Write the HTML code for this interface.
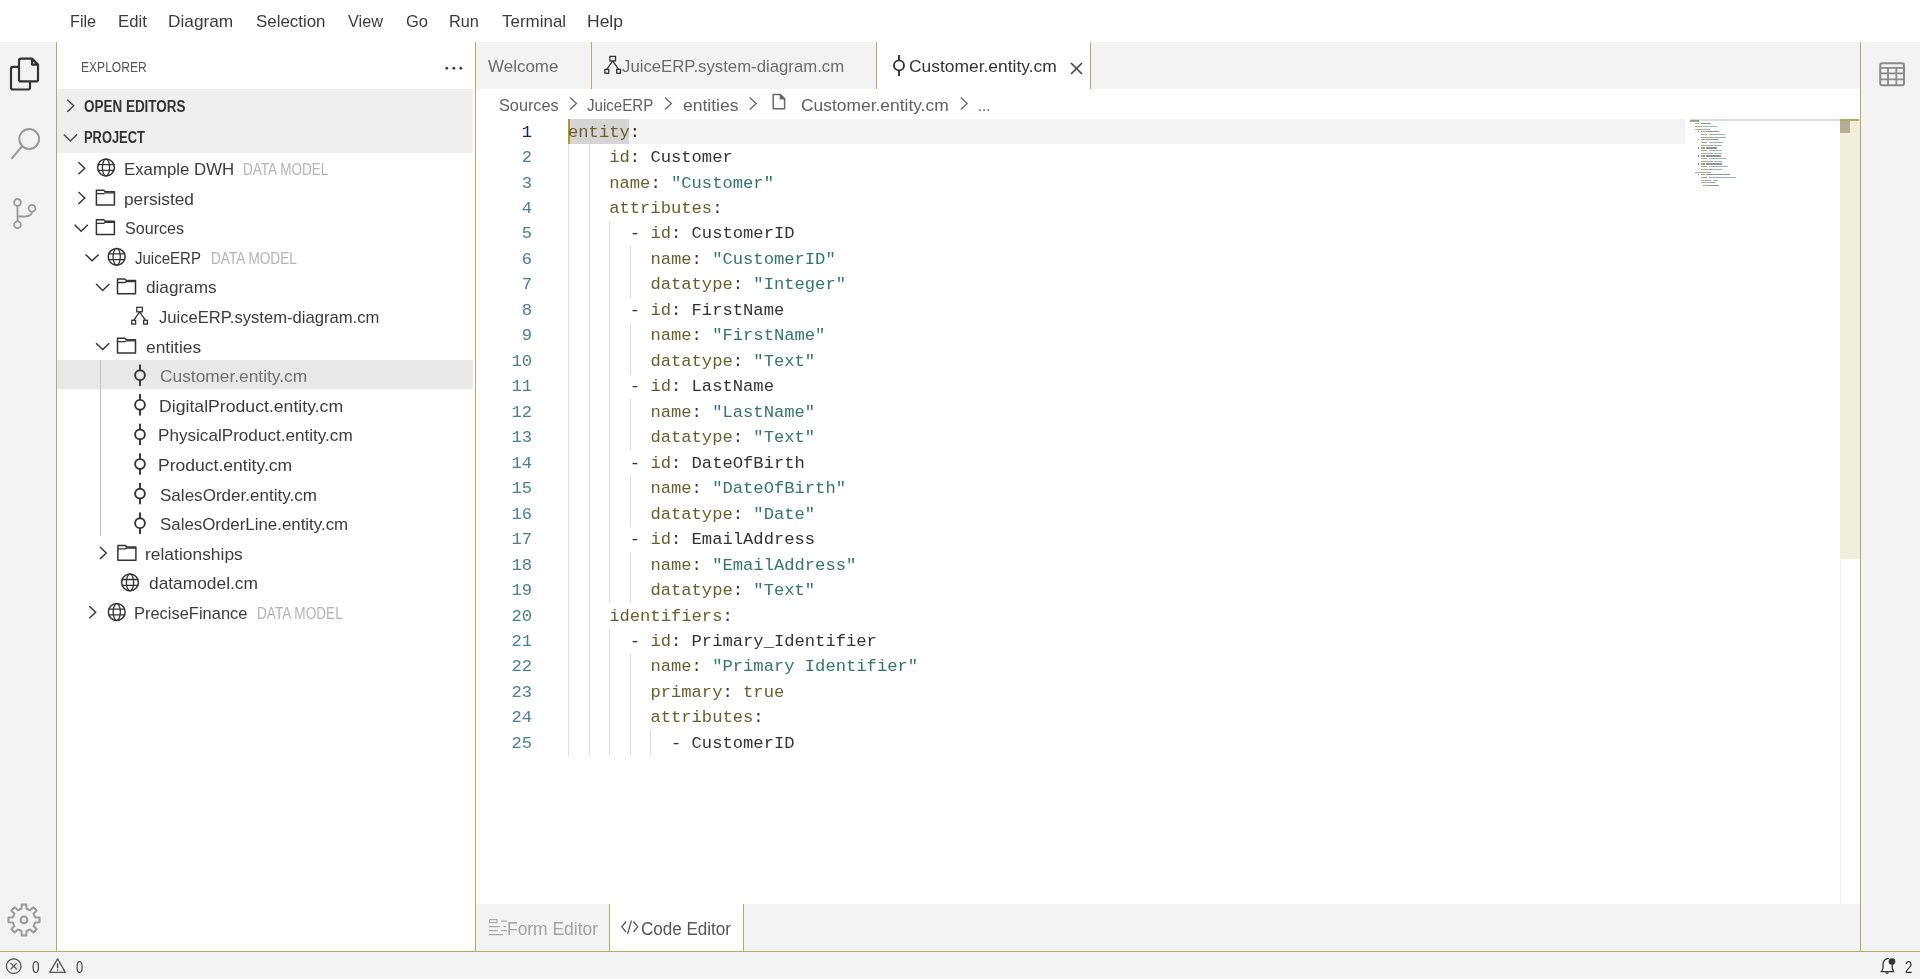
<!DOCTYPE html>
<html><head><meta charset="utf-8"><style>
html,body{margin:0;padding:0;width:1920px;height:979px;overflow:hidden;background:#fff;position:relative}
.r{position:absolute}
.t{position:absolute;white-space:pre;font-family:"Liberation Sans",sans-serif;transform-origin:0 0}
.cl{position:absolute;white-space:pre;font-family:"Liberation Mono",monospace;font-size:17.17px;line-height:25.47px;height:25.47px;color:#333}
.ln{position:absolute;left:480px;width:52px;text-align:right;white-space:pre;font-family:"Liberation Mono",monospace;font-size:17.17px;line-height:25.47px}
svg{position:absolute;left:0;top:0}
</style></head><body><div id="root" style="position:absolute;left:0;top:0;width:1920px;height:979px;overflow:hidden;will-change:transform">
<div class="r" style="left:0px;top:0px;width:1920px;height:42px;background:#ffffff"></div><div class="r" style="left:0px;top:42px;width:56px;height:909px;background:#f3f3f3"></div><div class="r" style="left:56px;top:42px;width:1px;height:909px;background:#b3aa66"></div><div class="r" style="left:57px;top:89px;width:416px;height:64px;background:#efefef"></div><div class="r" style="left:57px;top:360.2px;width:416px;height:28.8px;background:#e8e8e8"></div><div class="r" style="left:100px;top:360px;width:1px;height:176px;background:#c4c4c4"></div><div class="r" style="left:475px;top:42px;width:1px;height:909px;background:#b3aa66"></div><div class="r" style="left:476px;top:42px;width:1384px;height:47px;background:#f3f3f3"></div><div class="r" style="left:877px;top:42px;width:213px;height:47px;background:#ffffff"></div><div class="r" style="left:591px;top:42px;width:1px;height:47px;background:#b3aa66"></div><div class="r" style="left:876px;top:42px;width:1px;height:47px;background:#b3aa66"></div><div class="r" style="left:1090px;top:42px;width:1px;height:47px;background:#b3aa66"></div><div class="r" style="left:568px;top:118.8px;width:1117px;height:25px;background:#f3f3f3"></div><div class="r" style="left:568px;top:118.8px;width:61px;height:25px;background:#d5d5d5"></div><div class="r" style="left:1690px;top:119px;width:150px;height:2px;background:#dcdcdc"></div><div class="r" style="left:1840px;top:118.8px;width:20px;height:440px;background:#f3eddb"></div><div class="r" style="left:1840px;top:118.8px;width:19px;height:2px;background:#b3aa66"></div><div class="r" style="left:1840px;top:121.4px;width:9.6px;height:11.3px;background:#b6ae92"></div><div class="r" style="left:1840px;top:558.8px;width:1px;height:345px;background:#f0f0f0"></div><div class="r" style="left:1860px;top:42px;width:1px;height:909px;background:#b3aa66"></div><div class="r" style="left:1861px;top:42px;width:59px;height:909px;background:#f3f3f3"></div><div class="r" style="left:476px;top:903.75px;width:1384px;height:47.25px;background:#f3f3f3"></div><div class="r" style="left:609px;top:903.75px;width:133.5px;height:47.25px;background:#ffffff"></div><div class="r" style="left:608.5px;top:903.75px;width:1px;height:47.25px;background:#b3aa66"></div><div class="r" style="left:742.5px;top:903.75px;width:1px;height:47.25px;background:#b3aa66"></div><div class="r" style="left:0px;top:951px;width:1920px;height:1px;background:#b3aa66"></div><div class="r" style="left:0px;top:952px;width:1920px;height:27px;background:#f3f3f3"></div><div class="r" style="left:1690.0px;top:120.4px;width:8.04px;height:1.3px;background:#6a5f2c88"></div><div class="r" style="left:1698.04px;top:120.4px;width:1.34px;height:1.3px;background:#33333388"></div><div class="r" style="left:568.0px;top:144.26999999999998px;width:1px;height:25.97px;background:#dcdcdc"></div><div class="r" style="left:588.6px;top:144.26999999999998px;width:1px;height:25.97px;background:#dcdcdc"></div><div class="r" style="left:1695.36px;top:123.1px;width:2.68px;height:1.3px;background:#6a5f2c88"></div><div class="r" style="left:1698.04px;top:123.1px;width:1.34px;height:1.3px;background:#33333388"></div><div class="r" style="left:1700.72px;top:123.1px;width:10.72px;height:1.3px;background:#33333388"></div><div class="r" style="left:568.0px;top:169.74px;width:1px;height:25.97px;background:#dcdcdc"></div><div class="r" style="left:588.6px;top:169.74px;width:1px;height:25.97px;background:#dcdcdc"></div><div class="r" style="left:1695.36px;top:125.8px;width:5.36px;height:1.3px;background:#6a5f2c88"></div><div class="r" style="left:1700.72px;top:125.8px;width:1.34px;height:1.3px;background:#33333388"></div><div class="r" style="left:1703.4px;top:125.8px;width:13.4px;height:1.3px;background:#33756f88"></div><div class="r" style="left:568.0px;top:195.20999999999998px;width:1px;height:25.97px;background:#dcdcdc"></div><div class="r" style="left:588.6px;top:195.20999999999998px;width:1px;height:25.97px;background:#dcdcdc"></div><div class="r" style="left:1695.36px;top:128.5px;width:13.4px;height:1.3px;background:#6a5f2c88"></div><div class="r" style="left:1708.76px;top:128.5px;width:1.34px;height:1.3px;background:#33333388"></div><div class="r" style="left:568.0px;top:220.68px;width:1px;height:25.97px;background:#dcdcdc"></div><div class="r" style="left:588.6px;top:220.68px;width:1px;height:25.97px;background:#dcdcdc"></div><div class="r" style="left:609.2px;top:220.68px;width:1px;height:25.97px;background:#dcdcdc"></div><div class="r" style="left:1698.04px;top:131.1px;width:1.34px;height:1.3px;background:#33333388"></div><div class="r" style="left:1700.72px;top:131.1px;width:2.68px;height:1.3px;background:#6a5f2c88"></div><div class="r" style="left:1703.4px;top:131.1px;width:1.34px;height:1.3px;background:#33333388"></div><div class="r" style="left:1706.08px;top:131.1px;width:13.4px;height:1.3px;background:#33333388"></div><div class="r" style="left:568.0px;top:246.14999999999998px;width:1px;height:25.97px;background:#dcdcdc"></div><div class="r" style="left:588.6px;top:246.14999999999998px;width:1px;height:25.97px;background:#dcdcdc"></div><div class="r" style="left:609.2px;top:246.14999999999998px;width:1px;height:25.97px;background:#dcdcdc"></div><div class="r" style="left:629.8px;top:246.14999999999998px;width:1px;height:25.97px;background:#dcdcdc"></div><div class="r" style="left:1700.72px;top:133.8px;width:5.36px;height:1.3px;background:#6a5f2c88"></div><div class="r" style="left:1706.08px;top:133.8px;width:1.34px;height:1.3px;background:#33333388"></div><div class="r" style="left:1708.76px;top:133.8px;width:16.08px;height:1.3px;background:#33756f88"></div><div class="r" style="left:568.0px;top:271.62px;width:1px;height:25.97px;background:#dcdcdc"></div><div class="r" style="left:588.6px;top:271.62px;width:1px;height:25.97px;background:#dcdcdc"></div><div class="r" style="left:609.2px;top:271.62px;width:1px;height:25.97px;background:#dcdcdc"></div><div class="r" style="left:629.8px;top:271.62px;width:1px;height:25.97px;background:#dcdcdc"></div><div class="r" style="left:1700.72px;top:136.5px;width:10.72px;height:1.3px;background:#6a5f2c88"></div><div class="r" style="left:1711.44px;top:136.5px;width:1.34px;height:1.3px;background:#33333388"></div><div class="r" style="left:1714.12px;top:136.5px;width:12.06px;height:1.3px;background:#33756f88"></div><div class="r" style="left:568.0px;top:297.09px;width:1px;height:25.97px;background:#dcdcdc"></div><div class="r" style="left:588.6px;top:297.09px;width:1px;height:25.97px;background:#dcdcdc"></div><div class="r" style="left:609.2px;top:297.09px;width:1px;height:25.97px;background:#dcdcdc"></div><div class="r" style="left:1698.04px;top:139.2px;width:1.34px;height:1.3px;background:#33333388"></div><div class="r" style="left:1700.72px;top:139.2px;width:2.68px;height:1.3px;background:#6a5f2c88"></div><div class="r" style="left:1703.4px;top:139.2px;width:1.34px;height:1.3px;background:#33333388"></div><div class="r" style="left:1706.08px;top:139.2px;width:12.06px;height:1.3px;background:#33333388"></div><div class="r" style="left:568.0px;top:322.56px;width:1px;height:25.97px;background:#dcdcdc"></div><div class="r" style="left:588.6px;top:322.56px;width:1px;height:25.97px;background:#dcdcdc"></div><div class="r" style="left:609.2px;top:322.56px;width:1px;height:25.97px;background:#dcdcdc"></div><div class="r" style="left:629.8px;top:322.56px;width:1px;height:25.97px;background:#dcdcdc"></div><div class="r" style="left:1700.72px;top:141.9px;width:5.36px;height:1.3px;background:#6a5f2c88"></div><div class="r" style="left:1706.08px;top:141.9px;width:1.34px;height:1.3px;background:#33333388"></div><div class="r" style="left:1708.76px;top:141.9px;width:14.74px;height:1.3px;background:#33756f88"></div><div class="r" style="left:568.0px;top:348.03px;width:1px;height:25.97px;background:#dcdcdc"></div><div class="r" style="left:588.6px;top:348.03px;width:1px;height:25.97px;background:#dcdcdc"></div><div class="r" style="left:609.2px;top:348.03px;width:1px;height:25.97px;background:#dcdcdc"></div><div class="r" style="left:629.8px;top:348.03px;width:1px;height:25.97px;background:#dcdcdc"></div><div class="r" style="left:1700.72px;top:144.6px;width:10.72px;height:1.3px;background:#6a5f2c88"></div><div class="r" style="left:1711.44px;top:144.6px;width:1.34px;height:1.3px;background:#33333388"></div><div class="r" style="left:1714.12px;top:144.6px;width:8.04px;height:1.3px;background:#33756f88"></div><div class="r" style="left:568.0px;top:373.5px;width:1px;height:25.97px;background:#dcdcdc"></div><div class="r" style="left:588.6px;top:373.5px;width:1px;height:25.97px;background:#dcdcdc"></div><div class="r" style="left:609.2px;top:373.5px;width:1px;height:25.97px;background:#dcdcdc"></div><div class="r" style="left:1698.04px;top:147.3px;width:1.34px;height:1.3px;background:#33333388"></div><div class="r" style="left:1700.72px;top:147.3px;width:2.68px;height:1.3px;background:#6a5f2c88"></div><div class="r" style="left:1703.4px;top:147.3px;width:1.34px;height:1.3px;background:#33333388"></div><div class="r" style="left:1706.08px;top:147.3px;width:10.72px;height:1.3px;background:#33333388"></div><div class="r" style="left:568.0px;top:398.96999999999997px;width:1px;height:25.97px;background:#dcdcdc"></div><div class="r" style="left:588.6px;top:398.96999999999997px;width:1px;height:25.97px;background:#dcdcdc"></div><div class="r" style="left:609.2px;top:398.96999999999997px;width:1px;height:25.97px;background:#dcdcdc"></div><div class="r" style="left:629.8px;top:398.96999999999997px;width:1px;height:25.97px;background:#dcdcdc"></div><div class="r" style="left:1700.72px;top:150.0px;width:5.36px;height:1.3px;background:#6a5f2c88"></div><div class="r" style="left:1706.08px;top:150.0px;width:1.34px;height:1.3px;background:#33333388"></div><div class="r" style="left:1708.76px;top:150.0px;width:13.4px;height:1.3px;background:#33756f88"></div><div class="r" style="left:568.0px;top:424.44px;width:1px;height:25.97px;background:#dcdcdc"></div><div class="r" style="left:588.6px;top:424.44px;width:1px;height:25.97px;background:#dcdcdc"></div><div class="r" style="left:609.2px;top:424.44px;width:1px;height:25.97px;background:#dcdcdc"></div><div class="r" style="left:629.8px;top:424.44px;width:1px;height:25.97px;background:#dcdcdc"></div><div class="r" style="left:1700.72px;top:152.6px;width:10.72px;height:1.3px;background:#6a5f2c88"></div><div class="r" style="left:1711.44px;top:152.6px;width:1.34px;height:1.3px;background:#33333388"></div><div class="r" style="left:1714.12px;top:152.6px;width:8.04px;height:1.3px;background:#33756f88"></div><div class="r" style="left:568.0px;top:449.91px;width:1px;height:25.97px;background:#dcdcdc"></div><div class="r" style="left:588.6px;top:449.91px;width:1px;height:25.97px;background:#dcdcdc"></div><div class="r" style="left:609.2px;top:449.91px;width:1px;height:25.97px;background:#dcdcdc"></div><div class="r" style="left:1698.04px;top:155.3px;width:1.34px;height:1.3px;background:#33333388"></div><div class="r" style="left:1700.72px;top:155.3px;width:2.68px;height:1.3px;background:#6a5f2c88"></div><div class="r" style="left:1703.4px;top:155.3px;width:1.34px;height:1.3px;background:#33333388"></div><div class="r" style="left:1706.08px;top:155.3px;width:14.74px;height:1.3px;background:#33333388"></div><div class="r" style="left:568.0px;top:475.38px;width:1px;height:25.97px;background:#dcdcdc"></div><div class="r" style="left:588.6px;top:475.38px;width:1px;height:25.97px;background:#dcdcdc"></div><div class="r" style="left:609.2px;top:475.38px;width:1px;height:25.97px;background:#dcdcdc"></div><div class="r" style="left:629.8px;top:475.38px;width:1px;height:25.97px;background:#dcdcdc"></div><div class="r" style="left:1700.72px;top:158.0px;width:5.36px;height:1.3px;background:#6a5f2c88"></div><div class="r" style="left:1706.08px;top:158.0px;width:1.34px;height:1.3px;background:#33333388"></div><div class="r" style="left:1708.76px;top:158.0px;width:17.42px;height:1.3px;background:#33756f88"></div><div class="r" style="left:568.0px;top:500.84999999999997px;width:1px;height:25.97px;background:#dcdcdc"></div><div class="r" style="left:588.6px;top:500.84999999999997px;width:1px;height:25.97px;background:#dcdcdc"></div><div class="r" style="left:609.2px;top:500.84999999999997px;width:1px;height:25.97px;background:#dcdcdc"></div><div class="r" style="left:629.8px;top:500.84999999999997px;width:1px;height:25.97px;background:#dcdcdc"></div><div class="r" style="left:1700.72px;top:160.7px;width:10.72px;height:1.3px;background:#6a5f2c88"></div><div class="r" style="left:1711.44px;top:160.7px;width:1.34px;height:1.3px;background:#33333388"></div><div class="r" style="left:1714.12px;top:160.7px;width:8.04px;height:1.3px;background:#33756f88"></div><div class="r" style="left:568.0px;top:526.3199999999999px;width:1px;height:25.97px;background:#dcdcdc"></div><div class="r" style="left:588.6px;top:526.3199999999999px;width:1px;height:25.97px;background:#dcdcdc"></div><div class="r" style="left:609.2px;top:526.3199999999999px;width:1px;height:25.97px;background:#dcdcdc"></div><div class="r" style="left:1698.04px;top:163.4px;width:1.34px;height:1.3px;background:#33333388"></div><div class="r" style="left:1700.72px;top:163.4px;width:2.68px;height:1.3px;background:#6a5f2c88"></div><div class="r" style="left:1703.4px;top:163.4px;width:1.34px;height:1.3px;background:#33333388"></div><div class="r" style="left:1706.08px;top:163.4px;width:16.08px;height:1.3px;background:#33333388"></div><div class="r" style="left:568.0px;top:551.79px;width:1px;height:25.97px;background:#dcdcdc"></div><div class="r" style="left:588.6px;top:551.79px;width:1px;height:25.97px;background:#dcdcdc"></div><div class="r" style="left:609.2px;top:551.79px;width:1px;height:25.97px;background:#dcdcdc"></div><div class="r" style="left:629.8px;top:551.79px;width:1px;height:25.97px;background:#dcdcdc"></div><div class="r" style="left:1700.72px;top:166.1px;width:5.36px;height:1.3px;background:#6a5f2c88"></div><div class="r" style="left:1706.08px;top:166.1px;width:1.34px;height:1.3px;background:#33333388"></div><div class="r" style="left:1708.76px;top:166.1px;width:18.76px;height:1.3px;background:#33756f88"></div><div class="r" style="left:568.0px;top:577.26px;width:1px;height:25.97px;background:#dcdcdc"></div><div class="r" style="left:588.6px;top:577.26px;width:1px;height:25.97px;background:#dcdcdc"></div><div class="r" style="left:609.2px;top:577.26px;width:1px;height:25.97px;background:#dcdcdc"></div><div class="r" style="left:629.8px;top:577.26px;width:1px;height:25.97px;background:#dcdcdc"></div><div class="r" style="left:1700.72px;top:168.8px;width:10.72px;height:1.3px;background:#6a5f2c88"></div><div class="r" style="left:1711.44px;top:168.8px;width:1.34px;height:1.3px;background:#33333388"></div><div class="r" style="left:1714.12px;top:168.8px;width:8.04px;height:1.3px;background:#33756f88"></div><div class="r" style="left:568.0px;top:602.7299999999999px;width:1px;height:25.97px;background:#dcdcdc"></div><div class="r" style="left:588.6px;top:602.7299999999999px;width:1px;height:25.97px;background:#dcdcdc"></div><div class="r" style="left:1695.36px;top:171.5px;width:14.74px;height:1.3px;background:#6a5f2c88"></div><div class="r" style="left:1710.1px;top:171.5px;width:1.34px;height:1.3px;background:#33333388"></div><div class="r" style="left:568.0px;top:628.1999999999999px;width:1px;height:25.97px;background:#dcdcdc"></div><div class="r" style="left:588.6px;top:628.1999999999999px;width:1px;height:25.97px;background:#dcdcdc"></div><div class="r" style="left:609.2px;top:628.1999999999999px;width:1px;height:25.97px;background:#dcdcdc"></div><div class="r" style="left:1698.04px;top:174.1px;width:1.34px;height:1.3px;background:#33333388"></div><div class="r" style="left:1700.72px;top:174.1px;width:2.68px;height:1.3px;background:#6a5f2c88"></div><div class="r" style="left:1703.4px;top:174.1px;width:1.34px;height:1.3px;background:#33333388"></div><div class="r" style="left:1706.08px;top:174.1px;width:24.12px;height:1.3px;background:#33333388"></div><div class="r" style="left:568.0px;top:653.67px;width:1px;height:25.97px;background:#dcdcdc"></div><div class="r" style="left:588.6px;top:653.67px;width:1px;height:25.97px;background:#dcdcdc"></div><div class="r" style="left:609.2px;top:653.67px;width:1px;height:25.97px;background:#dcdcdc"></div><div class="r" style="left:629.8px;top:653.67px;width:1px;height:25.97px;background:#dcdcdc"></div><div class="r" style="left:1700.72px;top:176.8px;width:5.36px;height:1.3px;background:#6a5f2c88"></div><div class="r" style="left:1706.08px;top:176.8px;width:1.34px;height:1.3px;background:#33333388"></div><div class="r" style="left:1708.76px;top:176.8px;width:26.8px;height:1.3px;background:#33756f88"></div><div class="r" style="left:568.0px;top:679.1399999999999px;width:1px;height:25.97px;background:#dcdcdc"></div><div class="r" style="left:588.6px;top:679.1399999999999px;width:1px;height:25.97px;background:#dcdcdc"></div><div class="r" style="left:609.2px;top:679.1399999999999px;width:1px;height:25.97px;background:#dcdcdc"></div><div class="r" style="left:629.8px;top:679.1399999999999px;width:1px;height:25.97px;background:#dcdcdc"></div><div class="r" style="left:1700.72px;top:179.5px;width:9.38px;height:1.3px;background:#6a5f2c88"></div><div class="r" style="left:1710.1px;top:179.5px;width:1.34px;height:1.3px;background:#33333388"></div><div class="r" style="left:1712.78px;top:179.5px;width:5.36px;height:1.3px;background:#6a5f2c88"></div><div class="r" style="left:568.0px;top:704.6099999999999px;width:1px;height:25.97px;background:#dcdcdc"></div><div class="r" style="left:588.6px;top:704.6099999999999px;width:1px;height:25.97px;background:#dcdcdc"></div><div class="r" style="left:609.2px;top:704.6099999999999px;width:1px;height:25.97px;background:#dcdcdc"></div><div class="r" style="left:629.8px;top:704.6099999999999px;width:1px;height:25.97px;background:#dcdcdc"></div><div class="r" style="left:1700.72px;top:182.2px;width:13.4px;height:1.3px;background:#6a5f2c88"></div><div class="r" style="left:1714.12px;top:182.2px;width:1.34px;height:1.3px;background:#33333388"></div><div class="r" style="left:568.0px;top:730.0799999999999px;width:1px;height:25.97px;background:#dcdcdc"></div><div class="r" style="left:588.6px;top:730.0799999999999px;width:1px;height:25.97px;background:#dcdcdc"></div><div class="r" style="left:609.2px;top:730.0799999999999px;width:1px;height:25.97px;background:#dcdcdc"></div><div class="r" style="left:629.8px;top:730.0799999999999px;width:1px;height:25.97px;background:#dcdcdc"></div><div class="r" style="left:650.4px;top:730.0799999999999px;width:1px;height:25.97px;background:#dcdcdc"></div><div class="r" style="left:1703.4px;top:184.9px;width:1.34px;height:1.3px;background:#33333388"></div><div class="r" style="left:1706.08px;top:184.9px;width:13.4px;height:1.3px;background:#33333388"></div><div class="r" style="left:568px;top:118.8px;width:2px;height:25px;background:#b5952f"></div>
<div class="cl" style="top:119.60px;left:568px"><span style="color:#6a5f2c">entity</span><span style="color:#333333">:</span></div><div class="ln" style="top:119.60px;color:#0b216f">1</div><div class="cl" style="top:145.07px;left:568px">    <span style="color:#6a5f2c">id</span><span style="color:#333333">: </span><span style="color:#333333">Customer</span></div><div class="ln" style="top:145.07px;color:#4a8093">2</div><div class="cl" style="top:170.54px;left:568px">    <span style="color:#6a5f2c">name</span><span style="color:#333333">: </span><span style="color:#33756f">"Customer"</span></div><div class="ln" style="top:170.54px;color:#4a8093">3</div><div class="cl" style="top:196.01px;left:568px">    <span style="color:#6a5f2c">attributes</span><span style="color:#333333">:</span></div><div class="ln" style="top:196.01px;color:#4a8093">4</div><div class="cl" style="top:221.48px;left:568px">      <span style="color:#333333">- </span><span style="color:#6a5f2c">id</span><span style="color:#333333">: </span><span style="color:#333333">CustomerID</span></div><div class="ln" style="top:221.48px;color:#4a8093">5</div><div class="cl" style="top:246.95px;left:568px">        <span style="color:#6a5f2c">name</span><span style="color:#333333">: </span><span style="color:#33756f">"CustomerID"</span></div><div class="ln" style="top:246.95px;color:#4a8093">6</div><div class="cl" style="top:272.42px;left:568px">        <span style="color:#6a5f2c">datatype</span><span style="color:#333333">: </span><span style="color:#33756f">"Integer"</span></div><div class="ln" style="top:272.42px;color:#4a8093">7</div><div class="cl" style="top:297.89px;left:568px">      <span style="color:#333333">- </span><span style="color:#6a5f2c">id</span><span style="color:#333333">: </span><span style="color:#333333">FirstName</span></div><div class="ln" style="top:297.89px;color:#4a8093">8</div><div class="cl" style="top:323.36px;left:568px">        <span style="color:#6a5f2c">name</span><span style="color:#333333">: </span><span style="color:#33756f">"FirstName"</span></div><div class="ln" style="top:323.36px;color:#4a8093">9</div><div class="cl" style="top:348.83px;left:568px">        <span style="color:#6a5f2c">datatype</span><span style="color:#333333">: </span><span style="color:#33756f">"Text"</span></div><div class="ln" style="top:348.83px;color:#4a8093">10</div><div class="cl" style="top:374.30px;left:568px">      <span style="color:#333333">- </span><span style="color:#6a5f2c">id</span><span style="color:#333333">: </span><span style="color:#333333">LastName</span></div><div class="ln" style="top:374.30px;color:#4a8093">11</div><div class="cl" style="top:399.77px;left:568px">        <span style="color:#6a5f2c">name</span><span style="color:#333333">: </span><span style="color:#33756f">"LastName"</span></div><div class="ln" style="top:399.77px;color:#4a8093">12</div><div class="cl" style="top:425.24px;left:568px">        <span style="color:#6a5f2c">datatype</span><span style="color:#333333">: </span><span style="color:#33756f">"Text"</span></div><div class="ln" style="top:425.24px;color:#4a8093">13</div><div class="cl" style="top:450.71px;left:568px">      <span style="color:#333333">- </span><span style="color:#6a5f2c">id</span><span style="color:#333333">: </span><span style="color:#333333">DateOfBirth</span></div><div class="ln" style="top:450.71px;color:#4a8093">14</div><div class="cl" style="top:476.18px;left:568px">        <span style="color:#6a5f2c">name</span><span style="color:#333333">: </span><span style="color:#33756f">"DateOfBirth"</span></div><div class="ln" style="top:476.18px;color:#4a8093">15</div><div class="cl" style="top:501.65px;left:568px">        <span style="color:#6a5f2c">datatype</span><span style="color:#333333">: </span><span style="color:#33756f">"Date"</span></div><div class="ln" style="top:501.65px;color:#4a8093">16</div><div class="cl" style="top:527.12px;left:568px">      <span style="color:#333333">- </span><span style="color:#6a5f2c">id</span><span style="color:#333333">: </span><span style="color:#333333">EmailAddress</span></div><div class="ln" style="top:527.12px;color:#4a8093">17</div><div class="cl" style="top:552.59px;left:568px">        <span style="color:#6a5f2c">name</span><span style="color:#333333">: </span><span style="color:#33756f">"EmailAddress"</span></div><div class="ln" style="top:552.59px;color:#4a8093">18</div><div class="cl" style="top:578.06px;left:568px">        <span style="color:#6a5f2c">datatype</span><span style="color:#333333">: </span><span style="color:#33756f">"Text"</span></div><div class="ln" style="top:578.06px;color:#4a8093">19</div><div class="cl" style="top:603.53px;left:568px">    <span style="color:#6a5f2c">identifiers</span><span style="color:#333333">:</span></div><div class="ln" style="top:603.53px;color:#4a8093">20</div><div class="cl" style="top:629.00px;left:568px">      <span style="color:#333333">- </span><span style="color:#6a5f2c">id</span><span style="color:#333333">: </span><span style="color:#333333">Primary_Identifier</span></div><div class="ln" style="top:629.00px;color:#4a8093">21</div><div class="cl" style="top:654.47px;left:568px">        <span style="color:#6a5f2c">name</span><span style="color:#333333">: </span><span style="color:#33756f">"Primary Identifier"</span></div><div class="ln" style="top:654.47px;color:#4a8093">22</div><div class="cl" style="top:679.94px;left:568px">        <span style="color:#6a5f2c">primary</span><span style="color:#333333">: </span><span style="color:#6a5f2c">true</span></div><div class="ln" style="top:679.94px;color:#4a8093">23</div><div class="cl" style="top:705.41px;left:568px">        <span style="color:#6a5f2c">attributes</span><span style="color:#333333">:</span></div><div class="ln" style="top:705.41px;color:#4a8093">24</div><div class="cl" style="top:730.88px;left:568px">          <span style="color:#333333">- </span><span style="color:#333333">CustomerID</span></div><div class="ln" style="top:730.88px;color:#4a8093">25</div>
<div class="t" style="left:70.30px;top:9px;font-size:17px;line-height:26px;font-weight:400;color:#3b3b3b;transform:scaleX(0.9542)">File</div><div class="t" style="left:117.62px;top:9px;font-size:17px;line-height:26px;font-weight:400;color:#3b3b3b;transform:scaleX(0.9835)">Edit</div><div class="t" style="left:168.39px;top:9px;font-size:17px;line-height:26px;font-weight:400;color:#3b3b3b;transform:scaleX(1.0146)">Diagram</div><div class="t" style="left:256.00px;top:9px;font-size:17px;line-height:26px;font-weight:400;color:#3b3b3b;transform:scaleX(0.9931)">Selection</div><div class="t" style="left:347.80px;top:9px;font-size:17px;line-height:26px;font-weight:400;color:#3b3b3b;transform:scaleX(0.9554)">View</div><div class="t" style="left:405.60px;top:9px;font-size:17px;line-height:26px;font-weight:400;color:#3b3b3b;transform:scaleX(0.9720)">Go</div><div class="t" style="left:449.24px;top:9px;font-size:17px;line-height:26px;font-weight:400;color:#3b3b3b;transform:scaleX(0.9603)">Run</div><div class="t" style="left:501.70px;top:9px;font-size:17px;line-height:26px;font-weight:400;color:#3b3b3b;transform:scaleX(0.9974)">Terminal</div><div class="t" style="left:586.97px;top:9px;font-size:17px;line-height:26px;font-weight:400;color:#3b3b3b;transform:scaleX(1.0296)">Help</div><div class="t" style="left:81.00px;top:56px;font-size:15px;line-height:22px;font-weight:400;color:#555555;transform:scaleX(0.8038)">EXPLORER</div><div class="t" style="left:84.40px;top:95px;font-size:16px;line-height:24px;font-weight:700;color:#333333;transform:scaleX(0.8417)">OPEN EDITORS</div><div class="t" style="left:83.60px;top:126px;font-size:16px;line-height:24px;font-weight:700;color:#333333;transform:scaleX(0.8048)">PROJECT</div><div class="t" style="left:123.76px;top:157px;font-size:17px;line-height:26px;font-weight:400;color:#3b3b3b;transform:scaleX(0.9878)">Example DWH</div><div class="t" style="left:243.48px;top:157px;font-size:16.5px;line-height:25px;font-weight:400;color:#b4b4b4;transform:scaleX(0.8211)">DATA MODEL</div><div class="t" style="left:123.74px;top:187px;font-size:17px;line-height:26px;font-weight:400;color:#3b3b3b;transform:scaleX(1.0137)">persisted</div><div class="t" style="left:124.75px;top:216px;font-size:17px;line-height:26px;font-weight:400;color:#3b3b3b;transform:scaleX(0.9464)">Sources</div><div class="t" style="left:134.90px;top:246px;font-size:17px;line-height:26px;font-weight:400;color:#3b3b3b;transform:scaleX(0.8829)">JuiceERP</div><div class="t" style="left:211.42px;top:246px;font-size:16.5px;line-height:25px;font-weight:400;color:#b4b4b4;transform:scaleX(0.8264)">DATA MODEL</div><div class="t" style="left:146.30px;top:275px;font-size:17px;line-height:26px;font-weight:400;color:#3b3b3b;transform:scaleX(1.0084)">diagrams</div><div class="t" style="left:159.00px;top:305px;font-size:17px;line-height:26px;font-weight:400;color:#3b3b3b;transform:scaleX(0.9773)">JuiceERP.system-diagram.cm</div><div class="t" style="left:146.30px;top:335px;font-size:17px;line-height:26px;font-weight:400;color:#3b3b3b;transform:scaleX(1.0232)">entities</div><div class="t" style="left:159.60px;top:364px;font-size:17px;line-height:26px;font-weight:400;color:#707070;transform:scaleX(1.0204)">Customer.entity.cm</div><div class="t" style="left:158.56px;top:394px;font-size:17px;line-height:26px;font-weight:400;color:#3b3b3b;transform:scaleX(1.0384)">DigitalProduct.entity.cm</div><div class="t" style="left:158.49px;top:423px;font-size:17px;line-height:26px;font-weight:400;color:#3b3b3b;transform:scaleX(1.0067)">PhysicalProduct.entity.cm</div><div class="t" style="left:158.47px;top:453px;font-size:17px;line-height:26px;font-weight:400;color:#3b3b3b;transform:scaleX(1.0318)">Product.entity.cm</div><div class="t" style="left:159.50px;top:483px;font-size:17px;line-height:26px;font-weight:400;color:#3b3b3b;transform:scaleX(1.0025)">SalesOrder.entity.cm</div><div class="t" style="left:159.50px;top:512px;font-size:17px;line-height:26px;font-weight:400;color:#3b3b3b;transform:scaleX(0.9924)">SalesOrderLine.entity.cm</div><div class="t" style="left:145.23px;top:542px;font-size:17px;line-height:26px;font-weight:400;color:#3b3b3b;transform:scaleX(1.0246)">relationships</div><div class="t" style="left:148.75px;top:571px;font-size:17px;line-height:26px;font-weight:400;color:#3b3b3b;transform:scaleX(1.0201)">datamodel.cm</div><div class="t" style="left:134.03px;top:601px;font-size:17px;line-height:26px;font-weight:400;color:#3b3b3b;transform:scaleX(0.9679)">PreciseFinance</div><div class="t" style="left:256.68px;top:601px;font-size:16.5px;line-height:25px;font-weight:400;color:#b4b4b4;transform:scaleX(0.8250)">DATA MODEL</div><div class="t" style="left:488.00px;top:54px;font-size:17px;line-height:26px;font-weight:400;color:#6b6b6b;transform:scaleX(0.9988)">Welcome</div><div class="t" style="left:622.00px;top:54px;font-size:17px;line-height:26px;font-weight:400;color:#6b6b6b;transform:scaleX(0.9853)">JuiceERP.system-diagram.cm</div><div class="t" style="left:909.40px;top:54px;font-size:17px;line-height:26px;font-weight:400;color:#333333;transform:scaleX(1.0245)">Customer.entity.cm</div><div class="t" style="left:498.50px;top:93px;font-size:17px;line-height:26px;font-weight:400;color:#616161;transform:scaleX(0.9569)">Sources</div><div class="t" style="left:586.80px;top:93px;font-size:17px;line-height:26px;font-weight:400;color:#616161;transform:scaleX(0.8869)">JuiceERP</div><div class="t" style="left:682.70px;top:93px;font-size:17px;line-height:26px;font-weight:400;color:#616161;transform:scaleX(1.0307)">entities</div><div class="t" style="left:801.00px;top:93px;font-size:17px;line-height:26px;font-weight:400;color:#616161;transform:scaleX(1.0238)">Customer.entity.cm</div><div class="t" style="left:978.13px;top:93px;font-size:17px;line-height:26px;font-weight:400;color:#616161;transform:scaleX(0.8677)">...</div><div class="t" style="left:506.53px;top:916px;font-size:18px;line-height:27px;font-weight:400;color:#a3a3a3;transform:scaleX(0.9675)">Form Editor</div><div class="t" style="left:641.00px;top:916px;font-size:18px;line-height:27px;font-weight:400;color:#555555;transform:scaleX(0.9468)">Code Editor</div><div class="t" style="left:32.20px;top:956px;font-size:16px;line-height:24px;font-weight:400;color:#444444;transform:scaleX(0.8556)">0</div><div class="t" style="left:75.90px;top:956px;font-size:16px;line-height:24px;font-weight:400;color:#444444;transform:scaleX(0.8111)">0</div><div class="t" style="left:1905.20px;top:955px;font-size:17px;line-height:26px;font-weight:400;color:#333333;transform:scaleX(0.7778)">2</div>
<svg width="1920" height="979" viewBox="0 0 1920 979"><path d="M18.8 66.8 H13 Q11 66.8 11 68.8 V87.5 Q11 89.5 13 89.5 H28 Q30 89.5 30 87.5 V81.5" fill="none" stroke="#333333" stroke-width="2.2"/><path d="M21 58.6 H32 L38 64.6 V79.4 Q38 81.4 36 81.4 H21 Q19 81.4 19 79.4 V60.6 Q19 58.6 21 58.6 Z M32 58.6 V64.6 H38" fill="none" stroke="#333333" stroke-width="2.2" stroke-linejoin="round"/><circle cx="29.2" cy="139" r="9.9" fill="none" stroke="#9a9a9a" stroke-width="2"/><path d="M22.2 146 L11.5 158.8" stroke="#9a9a9a" stroke-width="2"/><circle cx="17.5" cy="202.4" r="3.4" fill="none" stroke="#9a9a9a" stroke-width="1.8"/><circle cx="32" cy="208.2" r="3.4" fill="none" stroke="#9a9a9a" stroke-width="1.8"/><circle cx="17.5" cy="224.8" r="3.4" fill="none" stroke="#9a9a9a" stroke-width="1.8"/><path d="M17.5 205.8 V221.4 M32 211.6 Q32 216.5 25 216.5 H17.5" fill="none" stroke="#9a9a9a" stroke-width="1.8"/><path d="M35.13 917.41 L39.52 917.55 L39.52 922.25 L35.13 922.39 L33.63 926.01 L36.64 929.22 L33.32 932.54 L30.11 929.53 L26.49 931.03 L26.35 935.42 L21.65 935.42 L21.51 931.03 L17.89 929.53 L14.68 932.54 L11.36 929.22 L14.37 926.01 L12.87 922.39 L8.48 922.25 L8.48 917.55 L12.87 917.41 L14.37 913.79 L11.36 910.58 L14.68 907.26 L17.89 910.27 L21.51 908.77 L21.65 904.38 L26.35 904.38 L26.49 908.77 L30.11 910.27 L33.32 907.26 L36.64 910.58 L33.63 913.79 Z" fill="none" stroke="#9a9a9a" stroke-width="2" stroke-linejoin="round"/><circle cx="24" cy="919.9" r="3.4" fill="none" stroke="#9a9a9a" stroke-width="2"/><circle cx="446.8" cy="68.3" r="1.45" fill="#444"/><circle cx="453.8" cy="68.3" r="1.45" fill="#444"/><circle cx="460.8" cy="68.3" r="1.45" fill="#444"/><path d="M67.3 99.8 L73.7 105.8 L67.3 111.8" fill="none" stroke="#444" stroke-width="1.4"/><path d="M63.800000000000004 134.60000000000002 L70.4 141.0 L77.0 134.60000000000002" fill="none" stroke="#444" stroke-width="1.4"/><path d="M78.45 162.3 L84.85000000000001 168.3 L78.45 174.3" fill="none" stroke="#333333" stroke-width="1.4"/><circle cx="106" cy="167.5" r="8.4" fill="none" stroke="#333333" stroke-width="1.5"/><ellipse cx="106" cy="167.5" rx="3.6" ry="8.4" fill="none" stroke="#333333" stroke-width="1.3"/><path d="M97.6 164.6 H114.4 M97.6 170.4 H114.4" stroke="#333333" stroke-width="1.3"/><path d="M78.45 191.9 L84.85000000000001 197.9 L78.45 203.9" fill="none" stroke="#333333" stroke-width="1.4"/><path d="M96.4 205.0 V190.2 H103.7 L105.2 191.7 H114.4 V205.0 Z" fill="none" stroke="#333333" stroke-width="1.5" stroke-linejoin="round"/><path d="M96.4 193.7 H103.7 L105.2 192.79999999999998 H114.4" fill="none" stroke="#333333" stroke-width="1.3"/><path d="M74.60000000000001 224.8 L81.2 231.2 L87.8 224.8" fill="none" stroke="#333333" stroke-width="1.4"/><path d="M96.4 234.6 V219.79999999999998 H103.7 L105.2 221.29999999999998 H114.4 V234.6 Z" fill="none" stroke="#333333" stroke-width="1.5" stroke-linejoin="round"/><path d="M96.4 223.29999999999998 H103.7 L105.2 222.39999999999998 H114.4" fill="none" stroke="#333333" stroke-width="1.3"/><path d="M85.5 254.40000000000003 L92.1 260.8 L98.69999999999999 254.40000000000003" fill="none" stroke="#333333" stroke-width="1.4"/><circle cx="116.7" cy="256.8" r="8.4" fill="none" stroke="#333333" stroke-width="1.5"/><ellipse cx="116.7" cy="256.8" rx="3.6" ry="8.4" fill="none" stroke="#333333" stroke-width="1.3"/><path d="M108.3 253.9 H125.10000000000001 M108.3 259.7 H125.10000000000001" stroke="#333333" stroke-width="1.3"/><path d="M96.10000000000001 284.00000000000006 L102.7 290.40000000000003 L109.3 284.00000000000006" fill="none" stroke="#333333" stroke-width="1.4"/><path d="M117.5 293.8 V279.00000000000006 H124.8 L126.3 280.50000000000006 H135.5 V293.8 Z" fill="none" stroke="#333333" stroke-width="1.5" stroke-linejoin="round"/><path d="M117.5 282.50000000000006 H124.8 L126.3 281.6000000000001 H135.5" fill="none" stroke="#333333" stroke-width="1.3"/><rect x="136.8" y="307.3" width="5.599999999999994" height="4.5" fill="none" stroke="#333333" stroke-width="1.3"/><rect x="131.8" y="320.3" width="3.799999999999983" height="3.8000000000000114" fill="none" stroke="#333333" stroke-width="1.3"/><rect x="143.6" y="320.3" width="3.8000000000000114" height="3.8000000000000114" fill="none" stroke="#333333" stroke-width="1.3"/><path d="M139.6 311.8 L133.7 320.3 M139.6 311.8 L145.5 320.3" stroke="#333333" stroke-width="1.3" fill="none"/><path d="M96.10000000000001 343.2 L102.7 349.59999999999997 L109.3 343.2" fill="none" stroke="#333333" stroke-width="1.4"/><path d="M117.5 352.99999999999994 V338.2 H124.8 L126.3 339.7 H135.5 V352.99999999999994 Z" fill="none" stroke="#333333" stroke-width="1.5" stroke-linejoin="round"/><path d="M117.5 341.7 H124.8 L126.3 340.8 H135.5" fill="none" stroke="#333333" stroke-width="1.3"/><circle cx="140" cy="375.2" r="4.9" fill="none" stroke="#333333" stroke-width="1.9"/><path d="M140 364.5 V370.3 M140 380.09999999999997 V385.9" stroke="#333333" stroke-width="1.9"/><circle cx="140" cy="404.8" r="4.9" fill="none" stroke="#333333" stroke-width="1.9"/><path d="M140 394.1 V399.90000000000003 M140 409.7 V415.5" stroke="#333333" stroke-width="1.9"/><circle cx="140" cy="434.4" r="4.9" fill="none" stroke="#333333" stroke-width="1.9"/><path d="M140 423.7 V429.5 M140 439.29999999999995 V445.09999999999997" stroke="#333333" stroke-width="1.9"/><circle cx="140" cy="464.0" r="4.9" fill="none" stroke="#333333" stroke-width="1.9"/><path d="M140 453.3 V459.1 M140 468.9 V474.7" stroke="#333333" stroke-width="1.9"/><circle cx="140" cy="493.6" r="4.9" fill="none" stroke="#333333" stroke-width="1.9"/><path d="M140 482.90000000000003 V488.70000000000005 M140 498.5 V504.3" stroke="#333333" stroke-width="1.9"/><circle cx="140" cy="523.2" r="4.9" fill="none" stroke="#333333" stroke-width="1.9"/><path d="M140 512.5 V518.3000000000001 M140 528.1 V533.9000000000001" stroke="#333333" stroke-width="1.9"/><path d="M99.89999999999999 547.1 L106.3 553.1 L99.89999999999999 559.1" fill="none" stroke="#333333" stroke-width="1.4"/><path d="M117.9 560.2 V545.4000000000001 H125.2 L126.7 546.9000000000001 H135.9 V560.2 Z" fill="none" stroke="#333333" stroke-width="1.5" stroke-linejoin="round"/><path d="M117.9 548.9000000000001 H125.2 L126.7 548.0000000000001 H135.9" fill="none" stroke="#333333" stroke-width="1.3"/><circle cx="130" cy="582.4000000000001" r="8.4" fill="none" stroke="#333333" stroke-width="1.5"/><ellipse cx="130" cy="582.4000000000001" rx="3.6" ry="8.4" fill="none" stroke="#333333" stroke-width="1.3"/><path d="M121.6 579.5000000000001 H138.4 M121.6 585.3000000000001 H138.4" stroke="#333333" stroke-width="1.3"/><path d="M89.3 606.3 L95.7 612.3 L89.3 618.3" fill="none" stroke="#333333" stroke-width="1.4"/><circle cx="116.75" cy="612.0" r="8.4" fill="none" stroke="#333333" stroke-width="1.5"/><ellipse cx="116.75" cy="612.0" rx="3.6" ry="8.4" fill="none" stroke="#333333" stroke-width="1.3"/><path d="M108.35 609.1 H125.15 M108.35 614.9 H125.15" stroke="#333333" stroke-width="1.3"/><rect x="609.9" y="56.400000000000006" width="5.600000000000023" height="4.5" fill="none" stroke="#333333" stroke-width="1.3"/><rect x="604.9" y="69.4" width="3.7999999999999545" height="3.8000000000000114" fill="none" stroke="#333333" stroke-width="1.3"/><rect x="616.6999999999999" y="69.4" width="3.800000000000068" height="3.8000000000000114" fill="none" stroke="#333333" stroke-width="1.3"/><path d="M612.6999999999999 60.900000000000006 L606.8 69.4 M612.6999999999999 60.900000000000006 L618.5999999999999 69.4" stroke="#333333" stroke-width="1.3" fill="none"/><circle cx="899" cy="65.4" r="5" fill="none" stroke="#333333" stroke-width="1.9"/><path d="M899 54.900000000000006 V60.400000000000006 M899 70.4 V75.9" stroke="#333333" stroke-width="1.9"/><path d="M1071 63 L1082 74 M1082 63 L1071 74" stroke="#444" stroke-width="1.6"/><path d="M570.0 97.5 L576.4000000000001 103.5 L570.0 109.5" fill="none" stroke="#666" stroke-width="1.3"/><path d="M665.0 97.5 L671.4000000000001 103.5 L665.0 109.5" fill="none" stroke="#666" stroke-width="1.3"/><path d="M749.8 97.5 L756.2 103.5 L749.8 109.5" fill="none" stroke="#666" stroke-width="1.3"/><path d="M960.8 97.5 L967.2 103.5 L960.8 109.5" fill="none" stroke="#666" stroke-width="1.3"/><path d="M773.2 94.6 H780.3 L784.6 98.9 V108.8 H773.2 Z" fill="none" stroke="#666" stroke-width="1.5" stroke-linejoin="round"/><path d="M780.3 94.6 V98.9 H784.6 Z" fill="#666" stroke="#666" stroke-width="1.2" stroke-linejoin="round"/><rect x="1880.2" y="63.2" width="23.8" height="22" rx="2" fill="none" stroke="#8a8a8a" stroke-width="2"/><path d="M1880.2 67.8 H1904 M1880.2 73.4 H1904 M1880.2 79.4 H1904 M1888 67.8 V85 M1896.3 67.8 V85" stroke="#8a8a8a" stroke-width="1.8"/><rect x="489.5" y="919.6" width="7.5" height="3" fill="none" stroke="#a8a8a8" stroke-width="1.1"/><path d="M501 921.1 H507 M489 926.6 H500 M503.5 926.6 H506 M489 930.6 H498 M501 930.6 H507 M489 934.6 H503" stroke="#a8a8a8" stroke-width="1.1"/><path d="M626 921.5 L621.8 926.8 L626 932 M633.5 921.5 L637.8 926.8 L633.5 932 M631.4 920.5 L627.6 934" fill="none" stroke="#555" stroke-width="1.25"/><circle cx="13.7" cy="966.2" r="7.3" fill="none" stroke="#555" stroke-width="1.3"/><path d="M10.6 963.1 L16.8 969.3 M16.8 963.1 L10.6 969.3" stroke="#555" stroke-width="1.3"/><path d="M57.6 958.8 L65.4 972.3 H49.8 Z" fill="none" stroke="#555" stroke-width="1.3" stroke-linejoin="round"/><path d="M57.6 963.2 V968.2 M57.6 969.5 V970.8" stroke="#555" stroke-width="1.5"/><path d="M1880.6 971.6 H1893.6 L1892.2 968 V963.5 M1881.7 971.6 L1883 968 V965 Q1883 958.5 1889 958.3" fill="none" stroke="#333" stroke-width="1.3"/><path d="M1885 972.5 Q1887 975.5 1889 972.5 Z" fill="#333"/><circle cx="1892" cy="961.5" r="3.3" fill="#333"/></svg>
</div></body></html>
